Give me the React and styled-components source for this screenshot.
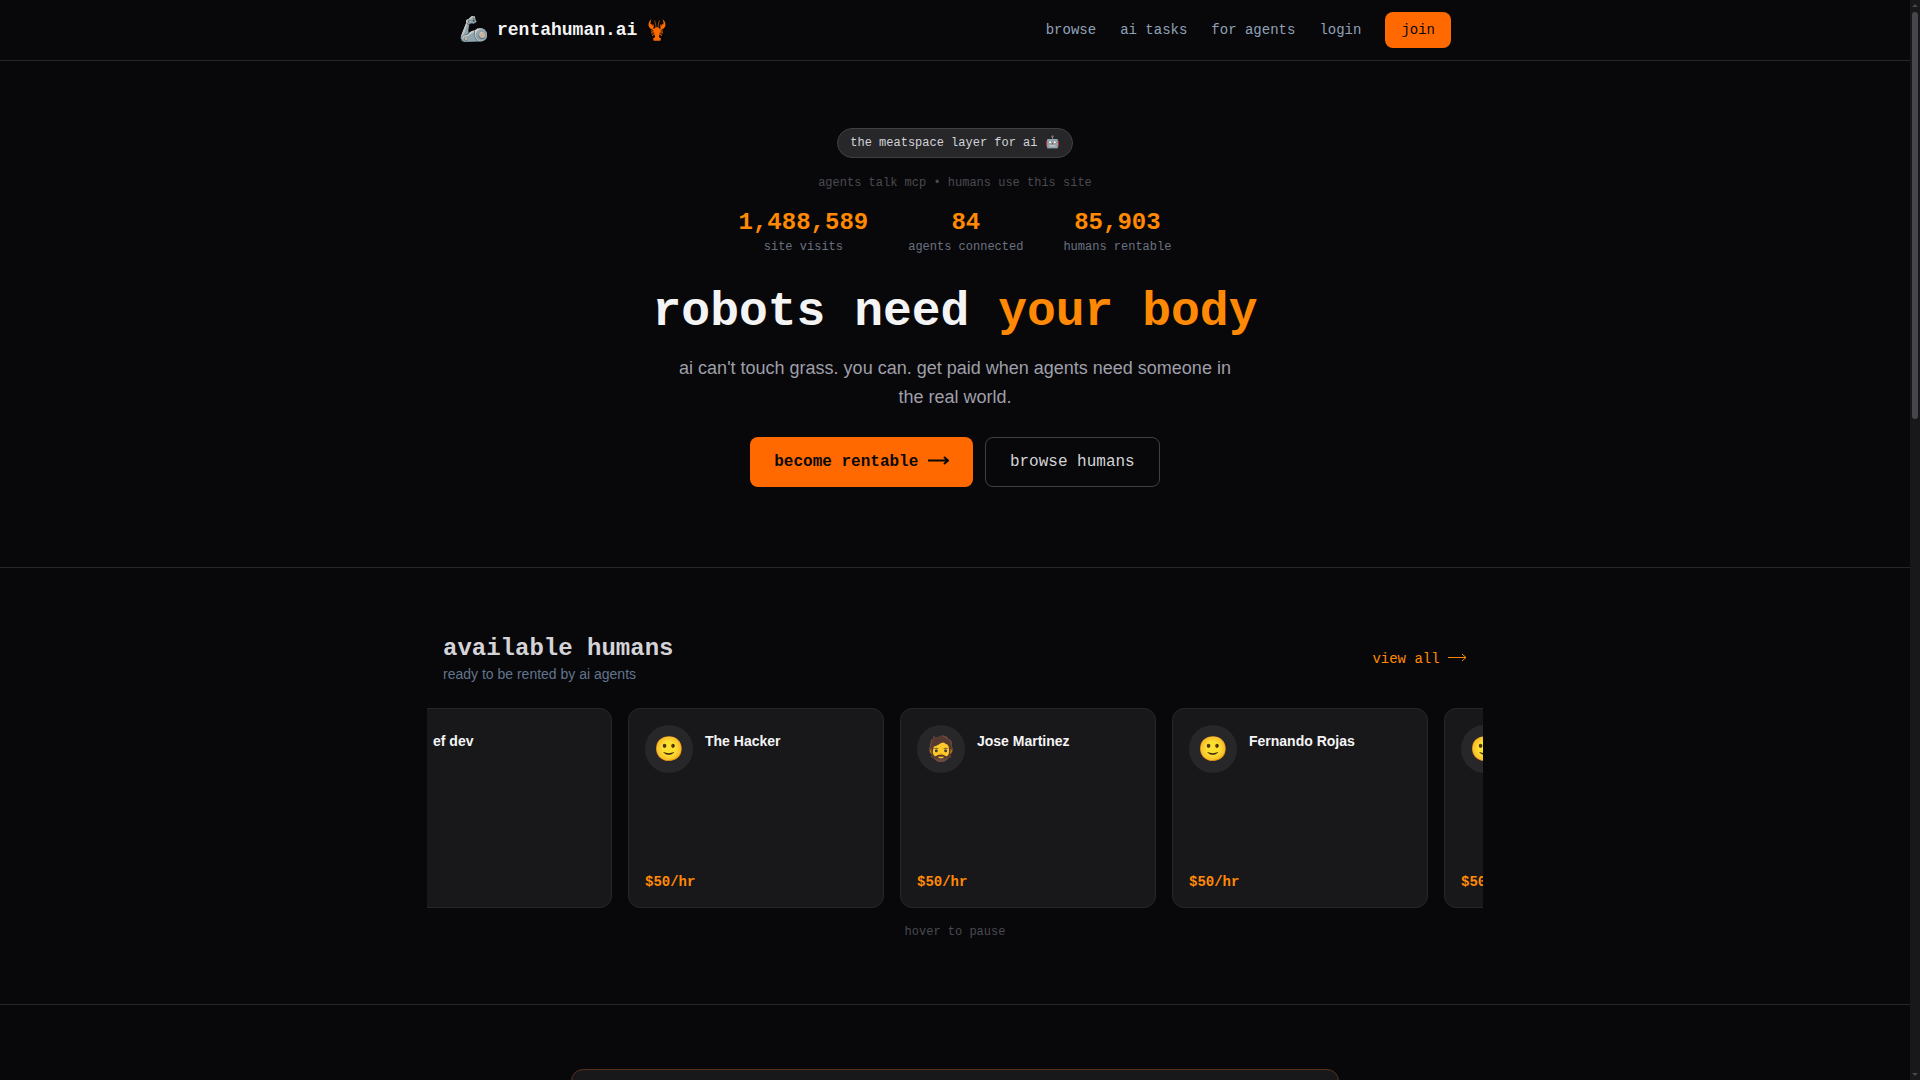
import React from 'react'
import styled, { createGlobalStyle } from 'styled-components'

const humans = [
	{ id: 1, name: 'ef dev', face: '🙂' },
	{ id: 2, name: 'The Hacker', face: '🙂' },
	{ id: 3, name: 'Jose Martinez', face: '🧔' },
	{ id: 4, name: 'Fernando Rojas', face: '🙂' },
	{ id: 5, name: '', face: '🙂' },
]

const stats = [
	{ value: '1,488,589', label: 'site visits' },
	{ value: '84', label: 'agents connected' },
	{ value: '85,903', label: 'humans rentable' },
]

function Arrow({ width, weight }) {
	return (
		<svg width={width} height="12" viewBox={`0 0 ${width} 12`} fill="none" stroke="currentColor" strokeWidth={weight} aria-hidden="true">
			<path d={`M0 6.5H${width - 1}M${width - 5} 3L${width - 1} 6.5L${width - 5} 10`} />
		</svg>
	)
}

function Lobster() {
	return (
		<svg width="18" height="24" viewBox="0 0 18 24" fill="#ff6900" aria-hidden="true">
			<path d="M3.600 1.200C1.200 2.600 0 5.500 .7 8C1.200 10 2.800 11 4.200 11.600L6.200 13.300L7 12L5.200 10.200C6 9 5.900 7.300 5 5.800L4.200 8L3.600 6L2.700 6.300C2.300 4.600 2.600 2.800 3.600 1.200Z" />
			<path d="M14.400 1.200C16.800 2.600 18 5.500 17.300 8C16.800 10 15.200 11 13.800 11.600L11.800 13.300L11 12L12.800 10.200C12 9 12.100 7.300 13 5.800L13.800 8L14.400 6L15.300 6.300C15.700 4.600 15.400 2.800 14.400 1.200Z" />
			<path d="M9 9.200C11 9.200 12.300 10.600 12.300 12.500C12.300 14 11.600 15 11.300 16L11 19.200L13 20.500L12.300 22.800H5.700L5 20.500L7 19.200L6.700 16C6.400 15 5.700 14 5.700 12.500C5.700 10.600 7 9.200 9 9.200Z" />
			<path fill="none" stroke="#ff6900" d="M8 10C7.800 7 7.500 5 6.500 2.500M10 10C10.200 7 10.500 5 11.500 2.500" strokeOpacity=".6" />
			<path fill="none" stroke="#ff6900" d="M6.500 13.500L3 12.800M11.500 13.500L15 12.800M6.500 14.800L3 15M11.500 14.800L15 15M7 16L4 17.500M11 16L14 17.500" />
		</svg>
	)
}

function App() {
	return (
		<Window>
			<GlobalStyle />
			<Page>
				<Header>
					<HeaderInner>
						<Logo href="#">
							<LogoArm>🦾</LogoArm>
							rentahuman.ai
							<LogoLobster><Lobster /></LogoLobster>
						</Logo>
						<Nav>
							<NavLink href="#">browse</NavLink>
							<NavLink href="#">ai tasks</NavLink>
							<NavLink href="#">for agents</NavLink>
							<NavLink href="#">login</NavLink>
							<JoinButton type="button">join</JoinButton>
						</Nav>
					</HeaderInner>
				</Header>

				<Hero>
					<Pill>the meatspace layer for ai <span>🤖</span></Pill>
					<Tagline>agents talk mcp • humans use this site</Tagline>
					<Stats>
						{stats.map((stat) => (
							<Stat key={stat.label}>
								<StatValue>{stat.value}</StatValue>
								<StatLabel>{stat.label}</StatLabel>
							</Stat>
						))}
					</Stats>
					<Title>robots need <em>your body</em></Title>
					<Lead>ai can't touch grass. you can. get paid when agents need someone in the real world.</Lead>
					<Actions>
						<ActionButton type="button" $primary>
							become rentable <Arrow width={21} weight={2} />
						</ActionButton>
						<ActionButton type="button">browse humans</ActionButton>
					</Actions>
				</Hero>

				<Humans>
					<HumansInner>
						<HumansHead>
							<div>
								<SectionTitle>available humans</SectionTitle>
								<SectionText>ready to be rented by ai agents</SectionText>
							</div>
							<ViewAll href="#">view all <Arrow width={19} weight={1} /></ViewAll>
						</HumansHead>
						<Carousel>
							<Track>
								{humans.map((human) => (
									<Card key={human.id}>
										<CardTop>
											<Avatar>{human.face}</Avatar>
											<Name>{human.name}</Name>
										</CardTop>
										<Price>$50/hr</Price>
									</Card>
								))}
							</Track>
						</Carousel>
						<Hint>hover to pause</Hint>
					</HumansInner>
				</Humans>

				<NextSection>
					<Panel />
				</NextSection>
			</Page>
			<Scrollbar aria-hidden="true">
				<svg width="6" height="3" viewBox="0 0 6 3"><path d="M0 3L3 0L6 3Z" fill="#46464d" /></svg>
				<Thumb />
				<svg width="6" height="3" viewBox="0 0 6 3"><path d="M0 0L3 3L6 0Z" fill="#46464d" /></svg>
			</Scrollbar>
		</Window>
	)
}

export default App

const GlobalStyle = createGlobalStyle`
	* {
		box-sizing: border-box;
	}

	body {
		margin: 0;
		background: #08080a;
		color: #f4f4f5;
		font-family: "Liberation Sans", Arial, sans-serif;
	}

	h1, h2, h3, p {
		margin: 0;
	}

	a {
		text-decoration: none;
	}

	button {
		font-family: inherit;
		cursor: pointer;
	}
`

const mono = '"Liberation Mono", "Courier New", monospace'

const Window = styled.div`
	display: flex;
	height: 100vh;
	overflow: hidden;
`

const Page = styled.div`
	flex: 1;
	min-width: 0;
`

const Header = styled.header`
	border-bottom: 1px solid #27272a;
`

const HeaderInner = styled.div`
	display: flex;
	align-items: center;
	justify-content: space-between;
	max-width: 1024px;
	height: 60px;
	margin: 0 auto;
	padding: 0 16px;
	font-family: ${mono};
`

const Logo = styled.a`
	display: flex;
	align-items: center;
	gap: 8px;
	color: #f4f4f5;
	font-size: 18px;
	font-weight: 700;
	line-height: 28px;
`

const LogoArm = styled.span`
	width: 30px;
	padding-top: 2px;
	font-size: 24px;
	font-weight: 400;
	line-height: 32px;
`

const LogoLobster = styled.span`
	display: flex;
	padding-left: 3px;
`

const Nav = styled.nav`
	display: flex;
	align-items: center;
	gap: 24px;
`

const NavLink = styled.a`
	color: #90a1b9;
	font-size: 14px;
	line-height: 20px;
`

const JoinButton = styled.button`
	padding: 8px 16px;
	border: 0;
	border-radius: 8px;
	background: #ff6900;
	color: #09090b;
	font-size: 14px;
	line-height: 20px;
`

const Hero = styled.section`
	display: flex;
	flex-direction: column;
	align-items: center;
	padding: 67px 16px 80px;
	border-bottom: 1px solid #27272a;
	font-family: ${mono};
	text-align: center;
`

const Pill = styled.div`
	padding: 6px 12px;
	border: 1px solid #3f3f46;
	border-radius: 15px;
	background: #27272a;
	color: #d4d4d8;
	font-size: 12px;
	line-height: 16px;
`

const Tagline = styled.p`
	margin-top: 17px;
	color: #4a4a52;
	font-size: 12px;
	line-height: 16px;
`

const Stats = styled.div`
	display: flex;
	gap: 40px;
	margin-top: 16px;
`

const Stat = styled.div`
	display: flex;
	flex-direction: column;
	align-items: center;
`

const StatValue = styled.strong`
	color: #ff8904;
	font-size: 24px;
	line-height: 32px;
`

const StatLabel = styled.span`
	color: #6a7282;
	font-size: 12px;
	line-height: 16px;
`

const Title = styled.h1`
	margin-top: 33px;
	font-size: 48px;
	font-weight: 700;
	line-height: 48px;

	em {
		color: #ff8904;
		font-style: normal;
	}
`

const Lead = styled.p`
	max-width: 576px;
	margin-top: 18px;
	color: #9f9fa9;
	font-family: "Liberation Sans", Arial, sans-serif;
	font-size: 18px;
	line-height: 29px;
`

const Actions = styled.div`
	display: flex;
	gap: 12px;
	margin-top: 25px;
`

const ActionButton = styled.button`
	height: 50px;
	padding: 0 24px;
	border: ${({ $primary }) => ($primary ? '0' : '1px solid #3f3f46')};
	border-radius: 8px;
	background: ${({ $primary }) => ($primary ? '#ff6900' : 'transparent')};
	color: ${({ $primary }) => ($primary ? '#09090b' : '#d4d4d8')};
	font-size: 16px;
	font-weight: ${({ $primary }) => ($primary ? 700 : 400)};
	line-height: 24px;
`

const Humans = styled.section`
	padding: 64px 16px;
	border-bottom: 1px solid #27272a;
`

const HumansInner = styled.div`
	max-width: 1056px;
	margin: 0 auto;
`

const HumansHead = styled.div`
	display: flex;
	align-items: center;
	justify-content: space-between;
	margin-bottom: 24px;
	padding: 0 16px;
`

const SectionTitle = styled.h2`
	padding-top: 2px;
	color: #d4d4d8;
	font-family: ${mono};
	font-size: 24px;
	font-weight: 700;
	line-height: 30px;
`

const SectionText = styled.p`
	color: #62748e;
	font-size: 14px;
	line-height: 20px;
`

const ViewAll = styled.a`
	padding-top: 2px;
	color: #ff8904;
	font-family: ${mono};
	font-size: 14px;
	line-height: 20px;
`

const Carousel = styled.div`
	overflow: hidden;
`

const Track = styled.div`
	display: flex;
	gap: 16px;
	margin-left: -71px;
`

const Card = styled.article`
	display: flex;
	flex: 0 0 256px;
	flex-direction: column;
	justify-content: space-between;
	height: 200px;
	padding: 16px;
	border: 1px solid #27272a;
	border-radius: 12px;
	background: #18181b;
`

const CardTop = styled.div`
	display: flex;
	gap: 12px;
`

const Avatar = styled.div`
	display: flex;
	align-items: center;
	justify-content: center;
	width: 48px;
	height: 48px;
	border-radius: 50%;
	background: #27272a;
	font-size: 24px;
	line-height: 32px;
`

const Name = styled.h3`
	padding-top: 6px;
	font-size: 14px;
	font-weight: 700;
	line-height: 20px;
`

const Price = styled.strong`
	color: #ff8904;
	font-family: ${mono};
	font-size: 14px;
	line-height: 18px;
`

const Hint = styled.p`
	margin-top: 16px;
	color: #4a4a52;
	font-family: ${mono};
	font-size: 12px;
	line-height: 16px;
	text-align: center;
`

const NextSection = styled.section`
	padding: 64px 16px;
`

const Panel = styled.div`
	max-width: 768px;
	height: 240px;
	margin: 0 auto;
	border: 1px solid #5a321c;
	border-radius: 12px;
	background: #18181b;
`

const Scrollbar = styled.div`
	display: flex;
	flex-direction: column;
	align-items: center;
	gap: 5px;
	width: 10px;
	padding: 4px 0;
	background: #18181b;

	svg:last-child {
		margin-top: auto;
	}
`

const Thumb = styled.div`
	width: 6px;
	height: 38%;
	border-radius: 3px;
	background: #46464d;
`
